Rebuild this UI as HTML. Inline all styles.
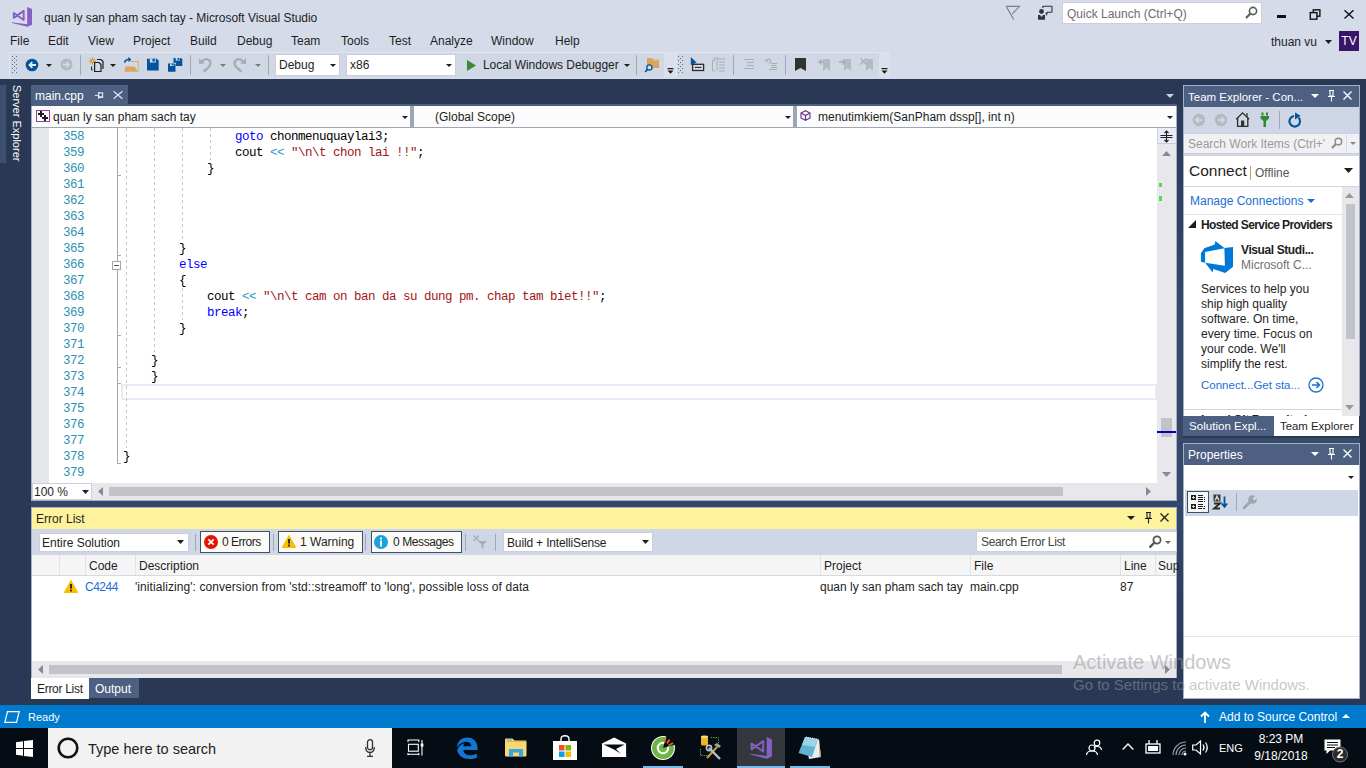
<!DOCTYPE html>
<html><head><meta charset="utf-8">
<style>
*{box-sizing:border-box}
html,body{margin:0;padding:0;width:1366px;height:768px;overflow:hidden;position:relative;background:#293955;font-family:"Liberation Sans",sans-serif;font-size:12px;color:#1e1e1e}
.a{position:absolute}
.t{position:absolute;white-space:nowrap;line-height:14px}
.mono{font-family:"Liberation Mono",monospace}
svg{position:absolute;overflow:visible}
.ln{position:absolute;left:48px;width:36px;text-align:right;font-family:"Liberation Mono",monospace;font-size:12.5px;letter-spacing:-0.5px;line-height:16px;color:#2B91AF;padding-top:1px;height:16px}
.cd{position:absolute;white-space:pre;font-family:"Liberation Mono",monospace;font-size:12.5px;letter-spacing:-0.5px;line-height:16px;color:#000;padding-top:1px;height:16px}
.kw{color:#0000FF}.str{color:#A31515}.op{color:#2B9BBF}
</style></head><body>
<!-- TOP CHROME -->
<div class="a" style="left:0;top:0;width:1366px;height:79px;background:#D6DBE9"></div>
<!-- VS logo -->
<svg style="left:11px;top:6px" width="22" height="22" viewBox="0 0 22 22">
<path d="M16.2 1 L21 3.1 V18.7 L16.5 20.8 L0.9 16.9 L0.9 16.3 L16.2 18.3 Z" fill="#865FC5"/>
<path d="M2.8 6.9 V11.9 L12.7 4.9 V14 Z" fill="none" stroke="#865FC5" stroke-width="1.9" stroke-linejoin="round"/>
</svg>
<div class="t" style="left:44px;top:11px;letter-spacing:-0.04px">quan ly san pham sach tay - Microsoft Visual Studio</div>

<!-- menu -->
<div class="t" style="left:10px;top:34px">File</div>
<div class="t" style="left:48px;top:34px">Edit</div>
<div class="t" style="left:88px;top:34px">View</div>
<div class="t" style="left:133px;top:34px">Project</div>
<div class="t" style="left:190px;top:34px">Build</div>
<div class="t" style="left:237px;top:34px">Debug</div>
<div class="t" style="left:291px;top:34px">Team</div>
<div class="t" style="left:341px;top:34px">Tools</div>
<div class="t" style="left:389px;top:34px">Test</div>
<div class="t" style="left:430px;top:34px">Analyze</div>
<div class="t" style="left:491px;top:34px">Window</div>
<div class="t" style="left:555px;top:34px">Help</div>

<!-- title right -->
<svg style="left:1005px;top:5px" width="16" height="16" viewBox="0 0 16 16"><path d="M1.2 1.4 H14.5 L7.3 8.8 M1.2 1.4 L8.8 14.5" fill="none" stroke="#7A808C" stroke-width="1.1"/></svg>
<svg style="left:1037px;top:5px" width="17" height="16" viewBox="0 0 17 16"><circle cx="4.5" cy="6.5" r="2.4" fill="#333"/><path d="M1 10 H3 L4.5 12 L6 10 H8 V14.8 H1 Z" fill="#333"/><path d="M5.8 3 V1.8 Q5.8 1.3 6.3 1.3 H14.5 Q15 1.3 15 1.8 V6.8 Q15 7.3 14.5 7.3 H10.5 L9.5 9.5 L9 7.3" fill="none" stroke="#333" stroke-width="1.1"/></svg>
<div class="a" style="left:1062px;top:2px;width:200px;height:22px;background:#FFFFFF;border:1px solid #CCCEDB"></div>
<div class="t" style="left:1067px;top:7px;color:#6D6D6D;font-size:12px">Quick Launch (Ctrl+Q)</div>
<svg style="left:1245px;top:6px" width="13" height="13" viewBox="0 0 13 13"><circle cx="8" cy="5" r="3.6" fill="none" stroke="#5A5A5A" stroke-width="1.6"/><path d="M5.5 7.5 L1 12" stroke="#5A5A5A" stroke-width="2.2"/></svg>
<div class="a" style="left:1277px;top:15px;width:9px;height:3px;background:#111"></div>
<svg style="left:1309px;top:9px" width="12" height="11" viewBox="0 0 12 11"><rect x="4.3" y="0.8" width="6.6" height="6.4" fill="none" stroke="#111" stroke-width="1.4"/><rect x="1.3" y="3.6" width="6.6" height="6.6" fill="#D6DBE9" stroke="#111" stroke-width="1.4"/></svg>
<svg style="left:1344px;top:10px" width="10" height="9" viewBox="0 0 10 9"><path d="M0.5 0.3 L9.5 8.5 M9.5 0.3 L0.5 8.5" stroke="#111" stroke-width="1.4"/></svg>
<div class="t" style="left:1271px;top:35px;font-size:12px">thuan vu</div>
<svg style="left:1325px;top:40px" width="7" height="4" viewBox="0 0 7 4"><path d="M0 0 H7 L3.5 4 Z" fill="#1E1E1E"/></svg>
<div class="a" style="left:1339px;top:31px;width:20px;height:20px;background:#3A1466"></div>
<div class="t" style="left:1339px;top:34px;width:20px;text-align:center;color:#fff;font-size:12px">TV</div>

<!-- TOOLBAR 1 -->
<div class="a" style="left:9px;top:52px;width:655px;height:25px;background:#D0D7E5;border-top:1px solid #E2E6EF;border-left:1px solid #E2E6EF"></div>
<div class="a" style="left:664px;top:52px;width:12px;height:25px;background:#DCE0EB"></div>
<div class="a" style="left:676px;top:52px;width:203px;height:25px;background:#D0D7E5;border-top:1px solid #E2E6EF;border-left:1px solid #E2E6EF"></div>
<div class="a" style="left:879px;top:52px;width:11px;height:25px;background:#DCE0EB"></div>
<svg style="left:12px;top:56px" width="5" height="18" viewBox="0 0 5 18"><g fill="#5F6B80"><rect x="0" y="0" width="1" height="1"/><rect x="4" y="0" width="1" height="1"/><rect x="2" y="2" width="1" height="1"/><rect x="0" y="4" width="1" height="1"/><rect x="4" y="4" width="1" height="1"/><rect x="2" y="6" width="1" height="1"/><rect x="0" y="8" width="1" height="1"/><rect x="4" y="8" width="1" height="1"/><rect x="2" y="10" width="1" height="1"/><rect x="0" y="12" width="1" height="1"/><rect x="4" y="12" width="1" height="1"/><rect x="2" y="14" width="1" height="1"/><rect x="0" y="16" width="1" height="1"/><rect x="4" y="16" width="1" height="1"/></g></svg>
<svg style="left:678px;top:56px" width="5" height="18" viewBox="0 0 5 18"><g fill="#5F6B80"><rect x="0" y="0" width="1" height="1"/><rect x="4" y="0" width="1" height="1"/><rect x="2" y="2" width="1" height="1"/><rect x="0" y="4" width="1" height="1"/><rect x="4" y="4" width="1" height="1"/><rect x="2" y="6" width="1" height="1"/><rect x="0" y="8" width="1" height="1"/><rect x="4" y="8" width="1" height="1"/><rect x="2" y="10" width="1" height="1"/><rect x="0" y="12" width="1" height="1"/><rect x="4" y="12" width="1" height="1"/><rect x="2" y="14" width="1" height="1"/><rect x="0" y="16" width="1" height="1"/><rect x="4" y="16" width="1" height="1"/></g></svg>
<!-- back/forward -->
<svg style="left:25px;top:58px" width="14" height="14" viewBox="0 0 14 14"><circle cx="7" cy="7" r="6.3" fill="#00539C"/><path d="M11 7 H4.5 M7.3 4.2 L4.5 7 L7.3 9.8" fill="none" stroke="#E8ECF4" stroke-width="1.8"/></svg>
<svg style="left:46px;top:64px" width="6" height="3" viewBox="0 0 6 3"><path d="M0 0 H6 L3 3 Z" fill="#1E1E1E"/></svg>
<svg style="left:60px;top:58px" width="13" height="13" viewBox="0 0 13 13"><circle cx="6.5" cy="6.5" r="6" fill="#B4B9C2"/><path d="M3 6.5 H9 M6.5 4 L9 6.5 L6.5 9" fill="none" stroke="#D6DAE3" stroke-width="1.7"/></svg>
<div class="a" style="left:80px;top:55px;width:1px;height:20px;background:#A0A8B8"></div>
<!-- new project -->
<svg style="left:89px;top:57px" width="16" height="16" viewBox="0 0 16 16"><path d="M3.5 0.5 V7.5 M0 4 H7 M1 1.5 L6 6.5 M6 1.5 L1 6.5" stroke="#D08A1E" stroke-width="1"/><circle cx="3.5" cy="4" r="1.3" fill="#CFD6E5" stroke="#D08A1E" stroke-width="0.9"/><path d="M8 2.5 H12 L14 4.5 V12" fill="none" stroke="#1E1E1E" stroke-width="1.2"/><path d="M5.6 5.5 H10 L12 7.5 V14.5 H5.6 Z" fill="#D6DBE6" stroke="#1E1E1E" stroke-width="1.2"/><path d="M2.6 9.5 V13 H3.8" fill="none" stroke="#1E1E1E" stroke-width="1"/></svg>
<svg style="left:110px;top:64px" width="6" height="3" viewBox="0 0 6 3"><path d="M0 0 H6 L3 3 Z" fill="#1E1E1E"/></svg>
<!-- open -->
<svg style="left:123px;top:57px" width="16" height="15" viewBox="0 0 16 15"><path d="M7.5 4.5 H15 V14.5" fill="none" stroke="#DCA75A" stroke-width="1.2"/><path d="M7 5 H14.6 V14 H7 Z" fill="#D3D8E3"/><path d="M2.5 9.5 H11.5 L15 14.7 H1.5 Z" fill="#DCA75A"/><path d="M1.5 5.5 Q2.5 2.2 6 2.5" fill="none" stroke="#00539C" stroke-width="1.6"/><path d="M5.3 0 L8.5 2.6 L5.5 5 Z" fill="#00539C"/></svg>
<!-- save -->
<svg style="left:147px;top:58px" width="12" height="13" viewBox="0 0 12 13"><path d="M0 0.8 H9.8 L11.7 2.8 V12.5 H0 Z" fill="#00539C"/><rect x="2.8" y="0.8" width="6" height="3.8" fill="#D0D6E4"/><rect x="5.5" y="0.8" width="2.3" height="2.8" fill="#00539C"/></svg>
<svg style="left:168px;top:58px" width="15" height="14" viewBox="0 0 15 14"><path d="M5.5 0 H13 L14.3 1.3 V8 H5.5 Z" fill="#00539C"/><rect x="7.7" y="0" width="4" height="2.6" fill="#D0D6E4"/><rect x="9.6" y="0" width="1.5" height="2" fill="#00539C"/><path d="M-0.5 4.8 H8 V14.3 H-0.5 Z" fill="#D0D6E4"/><path d="M0 5.5 H6.5 L7.5 6.5 V13.7 H0 Z" fill="#00539C"/><rect x="2" y="5.5" width="3.6" height="2.5" fill="#D0D6E4"/><rect x="3.7" y="5.5" width="1.3" height="1.8" fill="#00539C"/></svg>
<div class="a" style="left:190px;top:55px;width:1px;height:20px;background:#A0A8B8"></div>
<!-- undo/redo -->
<svg style="left:194px;top:54px" width="22" height="20" viewBox="0 0 22 20"><path d="M5 4.2 L5 10 L10.8 9.5 Z" fill="#A5ACB8"/><path d="M7.5 7.8 Q10.5 4.5 13.5 5.3 Q17.2 6.8 16.3 10.5 Q15.2 13.5 9.5 17.5" fill="none" stroke="#A5ACB8" stroke-width="2.3"/></svg>
<svg style="left:220px;top:64px" width="6" height="3" viewBox="0 0 6 3"><path d="M0 0 H6 L3 3 Z" fill="#7A7A7A"/></svg>
<svg style="left:229px;top:54px" width="22" height="20" viewBox="0 0 22 20"><g transform="translate(22,0) scale(-1,1)"><path d="M5 4.2 L5 10 L10.8 9.5 Z" fill="#A5ACB8"/><path d="M7.5 7.8 Q10.5 4.5 13.5 5.3 Q17.2 6.8 16.3 10.5 Q15.2 13.5 9.5 17.5" fill="none" stroke="#A5ACB8" stroke-width="2.3"/></g></svg>
<svg style="left:255px;top:64px" width="6" height="3" viewBox="0 0 6 3"><path d="M0 0 H6 L3 3 Z" fill="#7A7A7A"/></svg>
<div class="a" style="left:268px;top:55px;width:1px;height:20px;background:#A0A8B8"></div>
<!-- combos -->
<div class="a" style="left:275px;top:54px;width:65px;height:22px;background:#fff;border:1px solid #CCCEDB"></div>
<div class="t" style="left:279px;top:58px;font-size:12px">Debug</div>
<svg style="left:330px;top:64px" width="6" height="3" viewBox="0 0 6 3"><path d="M0 0 H6 L3 3 Z" fill="#1E1E1E"/></svg>
<div class="a" style="left:346px;top:54px;width:110px;height:22px;background:#fff;border:1px solid #CCCEDB"></div>
<div class="t" style="left:350px;top:58px;font-size:12px">x86</div>
<svg style="left:446px;top:64px" width="6" height="3" viewBox="0 0 6 3"><path d="M0 0 H6 L3 3 Z" fill="#1E1E1E"/></svg>
<svg style="left:467px;top:60px" width="9" height="11" viewBox="0 0 9 11"><path d="M0 0 L9 5.5 L0 11 Z" fill="#388A34"/></svg>
<div class="t" style="left:483px;top:58px;letter-spacing:-0.05px">Local Windows Debugger</div>
<svg style="left:624px;top:64px" width="6" height="3" viewBox="0 0 6 3"><path d="M0 0 H6 L3 3 Z" fill="#1E1E1E"/></svg>
<div class="a" style="left:636px;top:55px;width:1px;height:20px;background:#A0A8B8"></div>
<svg style="left:645px;top:57px" width="15" height="16" viewBox="0 0 15 16"><path d="M2 1 H7 L8 2 H14 V11 H2 Z" fill="#D9A55A"/><path d="M8.5 3 H13" stroke="#F2DDB5" stroke-width="0.9"/><circle cx="4.4" cy="10.5" r="2.6" fill="#D8DCE6" stroke="#00539C" stroke-width="1.3"/><path d="M2.6 12.4 L0.6 14.4" stroke="#00539C" stroke-width="1.7" stroke-linecap="round"/></svg>
<svg style="left:667px;top:68px" width="7" height="6" viewBox="0 0 7 6"><path d="M0.5 0 H6.5 V1.2 H0.5 Z M0.5 2.6 H6.5 L3.5 5.8 Z" fill="#1E1E1E"/></svg>
<!-- toolbar 2 icons -->
<svg style="left:690px;top:57px" width="15" height="15" viewBox="0 0 15 15"><path d="M0.8 0 L0.8 8.5 L2.8 6.6 L4.6 9.8 L5.8 9.2 L4.3 6 L6.8 5.8 Z" fill="#00539C"/><rect x="2.6" y="7.3" width="11" height="6.2" fill="#D6DBE7" stroke="#2A2A2A" stroke-width="1.3"/><path d="M4.8 10.4 H11.4" stroke="#2A2A2A" stroke-width="1.1"/></svg>
<svg style="left:712px;top:57px" width="14" height="15" viewBox="0 0 14 15"><path d="M3 3.5 H0.5 V14 H3 M2 3 V1 H7" fill="none" stroke="#A8AEB8" stroke-width="1"/><path d="M5 2 H13 M7 5 H13 M7 8 H13 M7 11 H13 M7 14 H13 M5 2 V14" stroke="#A8AEB8" stroke-width="1"/></svg>
<div class="a" style="left:733px;top:55px;width:1px;height:20px;background:#A0A8B8"></div>
<svg style="left:744px;top:59px" width="10" height="10" viewBox="0 0 10 10"><path d="M0 0.5 H10 M3 3.5 H10 M3 6.5 H10 M0 9.5 H10" stroke="#A8AEB8" stroke-width="1"/></svg>
<svg style="left:765px;top:58px" width="12" height="12" viewBox="0 0 12 12"><path d="M1 3 Q3 0 5.5 2 Q6.5 4 4 5" fill="none" stroke="#A8AEB8" stroke-width="1.2"/><path d="M0 1.5 L1 3.5 L3 3" fill="none" stroke="#A8AEB8" stroke-width="1"/><path d="M6 5.5 H12 M6 7.5 H12 M6 9.5 H12 M4 11.5 H12" stroke="#A8AEB8" stroke-width="1"/></svg>
<div class="a" style="left:785px;top:55px;width:1px;height:20px;background:#A0A8B8"></div>
<svg style="left:795px;top:58px" width="11" height="13" viewBox="0 0 11 13"><path d="M0 0 H11 V13 L5.5 10 L0 13 Z" fill="#333"/></svg>
<svg style="left:818px;top:58px" width="12" height="13" viewBox="0 0 12 13"><path d="M5 1 H12 V13 L8.5 10 L5 13 Z" fill="#B4B9C2"/><path d="M6 4 H1 M3.5 1.5 L1 4 L3.5 6.5" fill="none" stroke="#A8AEB8" stroke-width="1.4"/></svg>
<svg style="left:839px;top:58px" width="12" height="13" viewBox="0 0 12 13"><path d="M5 1 H12 V13 L8.5 10 L5 13 Z" fill="#B4B9C2"/><path d="M0 4 H6 M3.5 1.5 L6 4 L3.5 6.5" fill="none" stroke="#A8AEB8" stroke-width="1.4"/></svg>
<svg style="left:860px;top:58px" width="13" height="13" viewBox="0 0 13 13"><path d="M6 1 H13 V13 L9.5 10 L6 13 Z" fill="#B4B9C2"/><path d="M0.5 0.5 L6.5 6.5 M6.5 0.5 L0.5 6.5" stroke="#A8AEB8" stroke-width="1.4"/></svg>
<svg style="left:881px;top:68px" width="7" height="6" viewBox="0 0 7 6"><path d="M0.5 0 H6.5 V1.2 H0.5 Z M0.5 2.6 H6.5 L3.5 5.8 Z" fill="#1E1E1E"/></svg>

<!-- DOC TAB -->
<div class="a" style="left:31px;top:85px;width:97px;height:20px;background:#4D6082"></div>
<div class="t" style="left:35px;top:89px;color:#fff;font-size:12px">main.cpp</div>
<svg style="left:94px;top:91px" width="10" height="9" viewBox="0 0 10 9"><path d="M0.8 4.5 H4.5" stroke="#DDE1EA" stroke-width="1.2"/><path d="M4.6 1 V8" stroke="#DDE1EA" stroke-width="1.3"/><path d="M4.6 1.8 H8.6 V6.4 H4.6" fill="none" stroke="#DDE1EA" stroke-width="1.2"/><path d="M4.6 6 H9.1" stroke="#DDE1EA" stroke-width="1.6"/></svg>
<svg style="left:113px;top:91px" width="10" height="8" viewBox="0 0 10 8"><path d="M0.6 0.3 L9.4 7.7 M9.4 0.3 L0.6 7.7" stroke="#DDE1EA" stroke-width="1.3"/></svg>
<svg style="left:1166px;top:94px" width="8" height="4" viewBox="0 0 8 4"><path d="M0 0 H8 L4 4 Z" fill="#CED4DD"/></svg>
<div class="a" style="left:31px;top:104px;width:1146px;height:2px;background:#4D6082"></div>
<!-- NAV BAR -->
<div class="a" style="left:31px;top:106px;width:1146px;height:22px;background:#FCFCFC;border-bottom:1px solid #9BA6B6"></div>
<div class="a" style="left:410px;top:106px;width:4px;height:21px;background:#9BA6B6"></div>
<div class="a" style="left:793px;top:106px;width:4px;height:21px;background:#9BA6B6"></div>
<svg style="left:36px;top:110px" width="14" height="12" viewBox="0 0 14 12"><rect x="0.5" y="0.5" width="13" height="11" fill="#fff" stroke="#9B3FA0" stroke-width="1"/><path d="M2 4 H8 M5 1 V7 M6 8 H12 M9 5 V11" stroke="#1E1E1E" stroke-width="2"/></svg>
<div class="t" style="left:53px;top:110px;font-size:12px">quan ly san pham sach tay</div>
<svg style="left:402px;top:116px" width="6" height="3" viewBox="0 0 6 3"><path d="M0 0 H6 L3 3 Z" fill="#1E1E1E"/></svg>
<div class="t" style="left:435px;top:110px;font-size:12px">(Global Scope)</div>
<svg style="left:785px;top:116px" width="6" height="3" viewBox="0 0 6 3"><path d="M0 0 H6 L3 3 Z" fill="#1E1E1E"/></svg>
<svg style="left:800px;top:110px" width="11" height="11" viewBox="0 0 11 11"><path d="M5.5 0.7 L10 3 V8 L5.5 10.3 L1 8 V3 Z M1 3 L5.5 5.5 L10 3 M5.5 5.5 V10.3" fill="none" stroke="#652D90" stroke-width="1.1"/></svg>
<div class="t" style="left:818px;top:110px;font-size:12px">menutimkiem(SanPham dssp[], int n)</div>
<svg style="left:1167px;top:116px" width="6" height="3" viewBox="0 0 6 3"><path d="M0 0 H6 L3 3 Z" fill="#1E1E1E"/></svg>

<!-- EDITOR -->
<div class="a" style="left:31px;top:128px;width:1145px;height:355px;background:#FFFFFF"></div>
<div class="a" style="left:32px;top:128px;width:17px;height:355px;background:#E6E7E8"></div>
<div class="a" style="left:121px;top:384px;width:1036px;height:16px;border:2px solid #EAEAF2"></div>
<div class="a" style="left:126px;top:128px;width:1px;height:320px;background:repeating-linear-gradient(#C6C6C6 0 3px,transparent 3px 6px)"></div>
<div class="a" style="left:154px;top:128px;width:1px;height:224px;background:repeating-linear-gradient(#C6C6C6 0 3px,transparent 3px 6px)"></div>
<div class="a" style="left:182px;top:128px;width:1px;height:112px;background:repeating-linear-gradient(#C6C6C6 0 3px,transparent 3px 6px)"></div>
<div class="a" style="left:182px;top:288px;width:1px;height:32px;background:repeating-linear-gradient(#C6C6C6 0 3px,transparent 3px 6px)"></div>
<div class="a" style="left:210px;top:128px;width:1px;height:32px;background:repeating-linear-gradient(#C6C6C6 0 3px,transparent 3px 6px)"></div>
<div class="a" style="left:117px;top:128px;width:1px;height:133px;background:#A5A5A5"></div>
<div class="a" style="left:117px;top:269px;width:1px;height:195px;background:#A5A5A5"></div>
<div class="a" style="left:117px;top:175px;width:4px;height:1px;background:#A5A5A5"></div>
<div class="a" style="left:117px;top:255px;width:4px;height:1px;background:#A5A5A5"></div>
<div class="a" style="left:117px;top:335px;width:4px;height:1px;background:#A5A5A5"></div>
<div class="a" style="left:117px;top:367px;width:4px;height:1px;background:#A5A5A5"></div>
<div class="a" style="left:117px;top:383px;width:4px;height:1px;background:#A5A5A5"></div>
<div class="a" style="left:117px;top:463px;width:4px;height:1px;background:#A5A5A5"></div>
<div class="a" style="left:112px;top:261px;width:9px;height:9px;border:1px solid #A5A5A5;background:#fff"></div>
<div class="a" style="left:114px;top:265px;width:5px;height:1px;background:#555"></div>
<div class="ln" style="top:128px">358</div>
<div class="cd" style="left:235px;top:128px"><span class="kw">goto</span>&nbsp;chonmenuquaylai3;</div>
<div class="ln" style="top:144px">359</div>
<div class="cd" style="left:235px;top:144px">cout <span class="op">&lt;&lt;</span> <span class="str">"\n\t chon lai !!"</span>;</div>
<div class="ln" style="top:160px">360</div>
<div class="cd" style="left:207px;top:160px">}</div>
<div class="ln" style="top:176px">361</div>
<div class="ln" style="top:192px">362</div>
<div class="ln" style="top:208px">363</div>
<div class="ln" style="top:224px">364</div>
<div class="ln" style="top:240px">365</div>
<div class="cd" style="left:179px;top:240px">}</div>
<div class="ln" style="top:256px">366</div>
<div class="cd" style="left:179px;top:256px"><span class="kw">else</span></div>
<div class="ln" style="top:272px">367</div>
<div class="cd" style="left:179px;top:272px">{</div>
<div class="ln" style="top:288px">368</div>
<div class="cd" style="left:207px;top:288px">cout <span class="op">&lt;&lt;</span> <span class="str">"\n\t cam on ban da su dung pm. chap tam biet!!"</span>;</div>
<div class="ln" style="top:304px">369</div>
<div class="cd" style="left:207px;top:304px"><span class="kw">break</span>;</div>
<div class="ln" style="top:320px">370</div>
<div class="cd" style="left:179px;top:320px">}</div>
<div class="ln" style="top:336px">371</div>
<div class="ln" style="top:352px">372</div>
<div class="cd" style="left:151px;top:352px">}</div>
<div class="ln" style="top:368px">373</div>
<div class="cd" style="left:151px;top:368px">}</div>
<div class="ln" style="top:384px">374</div>
<div class="ln" style="top:400px">375</div>
<div class="ln" style="top:416px">376</div>
<div class="ln" style="top:432px">377</div>
<div class="ln" style="top:448px">378</div>
<div class="cd" style="left:123px;top:448px">}</div>
<div class="ln" style="top:464px">379</div>
<!-- V scrollbar -->
<div class="a" style="left:1157px;top:128px;width:19px;height:355px;background:#E8E8EC"></div>
<div class="a" style="left:1157px;top:128px;width:19px;height:16px;background:#E9EDF7;border-left:1px solid #CCCEDB;border-bottom:1px solid #CCCEDB"></div>
<svg style="left:1160px;top:130px" width="13" height="13" viewBox="0 0 13 13"><path d="M0.5 5.5 H12.5 M0.5 7.5 H12.5 M6.5 1 V12 M4.5 3 L6.5 1 L8.5 3 M4.5 10 L6.5 12 L8.5 10" fill="none" stroke="#1E1E1E" stroke-width="1.1"/></svg>
<svg style="left:1162px;top:151px" width="9" height="5" viewBox="0 0 9 5"><path d="M0 5 H9 L4.5 0 Z" fill="#868999"/></svg>
<svg style="left:1162px;top:472px" width="9" height="5" viewBox="0 0 9 5"><path d="M0 0 H9 L4.5 5 Z" fill="#868999"/></svg>
<div class="a" style="left:1159px;top:183px;width:3px;height:4px;background:#57D657"></div>
<div class="a" style="left:1159px;top:196px;width:3px;height:5px;background:#57D657"></div>
<div class="a" style="left:1161px;top:418px;width:11px;height:19px;background:#C2C3C9"></div>
<div class="a" style="left:1157px;top:431px;width:19px;height:2px;background:#0000CD"></div>
<!-- H scroll / zoom -->
<div class="a" style="left:31px;top:483px;width:1145px;height:17px;background:#E8E8EC"></div>
<div class="a" style="left:32px;top:483px;width:60px;height:17px;background:#fff;border:1px solid #CCCEDB"></div>
<div class="t" style="left:34px;top:485px;font-size:12px">100 %</div>
<svg style="left:82px;top:490px" width="7" height="4" viewBox="0 0 7 4"><path d="M0 0 H7 L3.5 4 Z" fill="#1E1E1E"/></svg>
<svg style="left:98px;top:487px" width="5" height="9" viewBox="0 0 5 9"><path d="M5 0 V9 L0 4.5 Z" fill="#868999"/></svg>
<div class="a" style="left:109px;top:487px;width:954px;height:9px;background:#C2C3C9"></div>
<svg style="left:1146px;top:487px" width="5" height="9" viewBox="0 0 5 9"><path d="M0 0 V9 L5 4.5 Z" fill="#868999"/></svg>

<div class="a" style="left:31px;top:106px;width:1146px;height:395px;border:1px solid #A3B0C8;border-top:none"></div>
<div class="a" style="left:1177px;top:104px;width:6px;height:594px;background:linear-gradient(#2B3A57 0px,#30405E 96px,#354869 196px,#354869 400px,#2F3F5D 496px,#2A3956 594px)"></div>
<div class="a" style="left:31px;top:501px;width:1146px;height:6px;background:#344769"></div>
<div class="a" style="left:1183px;top:437px;width:177px;height:6px;background:#364A6A"></div>
<!-- ERROR LIST -->
<div class="a" style="left:31px;top:507px;width:1146px;height:172px;background:#FFFFFF;border:1px solid #A3B0C8"></div>
<div class="a" style="left:32px;top:508px;width:1144px;height:21px;background:#FFF29D"></div>
<div class="t" style="left:36px;top:512px;font-size:12px">Error List</div>
<svg style="left:1127px;top:516px" width="8" height="4" viewBox="0 0 8 4"><path d="M0 0 H8 L4 4 Z" fill="#1E1E1E"/></svg>
<svg style="left:1144px;top:512px" width="9" height="12" viewBox="0 0 9 12"><path d="M2 0.5 H7 M3 0.5 V6 H6 V0.5 M1 6.5 H8 M4.5 6.5 V11.5" fill="none" stroke="#1E1E1E" stroke-width="1.1"/></svg>
<svg style="left:1160px;top:513px" width="9" height="9" viewBox="0 0 9 9"><path d="M0.5 0.5 L8.5 8.5 M8.5 0.5 L0.5 8.5" stroke="#1E1E1E" stroke-width="1.3"/></svg>
<div class="a" style="left:32px;top:529px;width:1144px;height:26px;background:#CFD6E5"></div>
<div class="a" style="left:39px;top:533px;width:150px;height:19px;background:#fff;border:1px solid #CCCEDB"></div>
<div class="t" style="left:42px;top:536px;font-size:12px">Entire Solution</div>
<svg style="left:177px;top:540px" width="7" height="4" viewBox="0 0 7 4"><path d="M0 0 H7 L3.5 4 Z" fill="#1E1E1E"/></svg>
<div class="a" style="left:195px;top:534px;width:1px;height:17px;background:#A0A8B8"></div>
<div class="a" style="left:200px;top:531px;width:70px;height:22px;background:#FCFBF7;border:1px solid #3F4F6C"></div>
<svg style="left:204px;top:535px" width="14" height="14" viewBox="0 0 14 14"><circle cx="7" cy="7" r="7" fill="#E51400"/><path d="M4.3 4.3 L9.7 9.7 M9.7 4.3 L4.3 9.7" stroke="#fff" stroke-width="1.8"/></svg>
<div class="t" style="left:222px;top:535px;font-size:12px;letter-spacing:-0.5px">0 Errors</div>
<div class="a" style="left:273px;top:534px;width:1px;height:17px;background:#A0A8B8"></div>
<div class="a" style="left:278px;top:531px;width:85px;height:22px;background:#FCFBF7;border:1px solid #3F4F6C"></div>
<svg style="left:282px;top:535px" width="14" height="13" viewBox="0 0 14 13"><path d="M7 0.5 L13.7 12.5 H0.3 Z" fill="#F6C000" stroke="#F6C000" stroke-linejoin="round"/><path d="M7 4 V8.5" stroke="#1E1E1E" stroke-width="1.8"/><rect x="6.1" y="9.6" width="1.8" height="1.8" fill="#1E1E1E"/></svg>
<div class="t" style="left:300px;top:535px;font-size:12px">1 Warning</div>
<div class="a" style="left:365px;top:534px;width:1px;height:17px;background:#A0A8B8"></div>
<div class="a" style="left:371px;top:531px;width:91px;height:22px;background:#FCFBF7;border:1px solid #3F4F6C"></div>
<svg style="left:374px;top:535px" width="14" height="14" viewBox="0 0 14 14"><circle cx="7" cy="7" r="7" fill="#1BA1E2"/><rect x="6" y="5.5" width="2" height="6" fill="#fff"/><rect x="6" y="2.5" width="2" height="2" fill="#fff"/></svg>
<div class="t" style="left:393px;top:535px;font-size:12px;letter-spacing:-0.4px">0 Messages</div>
<div class="a" style="left:465px;top:534px;width:1px;height:17px;background:#A0A8B8"></div>
<svg style="left:473px;top:535px" width="14" height="14" viewBox="0 0 14 14"><path d="M0.5 0.5 L6 6 M6 0.5 L0.5 6" stroke="#A8AEB8" stroke-width="1.4"/><path d="M5 6 H14 L10.5 9.5 V14 L8.5 12.5 V9.5 Z" fill="#A8AEB8"/></svg>
<div class="a" style="left:495px;top:534px;width:1px;height:17px;background:#A0A8B8"></div>
<div class="a" style="left:503px;top:532px;width:150px;height:20px;background:#fff;border:1px solid #CCCEDB"></div>
<div class="t" style="left:507px;top:536px;font-size:12px;letter-spacing:-0.15px">Build + IntelliSense</div>
<svg style="left:642px;top:540px" width="7" height="4" viewBox="0 0 7 4"><path d="M0 0 H7 L3.5 4 Z" fill="#1E1E1E"/></svg>
<div class="a" style="left:976px;top:531px;width:201px;height:21px;background:#fff;border:1px solid #CCCEDB"></div>
<div class="t" style="left:981px;top:535px;font-size:12px;letter-spacing:-0.35px;color:#444">Search Error List</div>
<svg style="left:1149px;top:535px" width="13" height="13" viewBox="0 0 13 13"><circle cx="8" cy="5" r="3.6" fill="none" stroke="#555" stroke-width="1.8"/><path d="M5.5 7.5 L1.2 11.8" stroke="#555" stroke-width="2.4" stroke-linecap="round"/></svg>
<svg style="left:1165px;top:541px" width="6" height="3" viewBox="0 0 6 3"><path d="M0 0 H6 L3 3 Z" fill="#666"/></svg>
<!-- column headers -->
<div class="a" style="left:32px;top:555px;width:1144px;height:21px;background:#F5F5F5;border-bottom:1px solid #D5D9E2"></div>
<div class="a" style="left:59px;top:555px;width:1px;height:20px;background:#E0E3E8"></div>
<div class="a" style="left:85px;top:555px;width:1px;height:20px;background:#E0E3E8"></div>
<div class="a" style="left:135px;top:555px;width:1px;height:20px;background:#E0E3E8"></div>
<div class="a" style="left:820px;top:555px;width:1px;height:20px;background:#E0E3E8"></div>
<div class="a" style="left:970px;top:555px;width:1px;height:20px;background:#E0E3E8"></div>
<div class="a" style="left:1120px;top:555px;width:1px;height:20px;background:#E0E3E8"></div>
<div class="a" style="left:1155px;top:555px;width:1px;height:20px;background:#E0E3E8"></div>
<div class="t" style="left:89px;top:559px;font-size:12px">Code</div>
<div class="t" style="left:139px;top:559px;font-size:12px">Description</div>
<div class="t" style="left:824px;top:559px;font-size:12px">Project</div>
<div class="t" style="left:974px;top:559px;font-size:12px">File</div>
<div class="t" style="left:1124px;top:559px;font-size:12px">Line</div>
<div class="t" style="left:1158px;top:559px;font-size:12px">Sup</div>
<svg style="left:64px;top:580px" width="14" height="13" viewBox="0 0 14 13"><path d="M7 0.5 L13.7 12.5 H0.3 Z" fill="#F6C000" stroke="#F6C000" stroke-linejoin="round"/><path d="M7 4 V8.5" stroke="#1E1E1E" stroke-width="1.8"/><rect x="6.1" y="9.6" width="1.8" height="1.8" fill="#1E1E1E"/></svg>
<div class="t" style="left:85px;top:580px;font-size:12px;letter-spacing:-0.5px;color:#1A6FD6">C4244</div>
<div class="t" style="left:135px;top:580px;font-size:12px;letter-spacing:0.07px">'initializing': conversion from 'std::streamoff' to 'long', possible loss of data</div>
<div class="t" style="left:820px;top:580px;font-size:12px">quan ly san pham sach tay</div>
<div class="t" style="left:970px;top:580px;font-size:12px">main.cpp</div>
<div class="t" style="left:1120px;top:580px;font-size:12px">87</div>
<!-- h scroll -->
<div class="a" style="left:32px;top:661px;width:1144px;height:17px;background:#E8E8EC"></div>
<svg style="left:38px;top:665px" width="5" height="9" viewBox="0 0 5 9"><path d="M5 0 V9 L0 4.5 Z" fill="#868999"/></svg>
<div class="a" style="left:49px;top:665px;width:1013px;height:9px;background:#C2C3C9"></div>
<svg style="left:1165px;top:665px" width="5" height="9" viewBox="0 0 5 9"><path d="M0 0 V9 L5 4.5 Z" fill="#868999"/></svg>
<!-- bottom tabs -->
<div class="a" style="left:31px;top:678px;width:1146px;height:27px;background:#293955"></div>
<div class="a" style="left:31px;top:678px;width:58px;height:21px;background:#FFFFFF"></div>
<div class="t" style="left:37px;top:682px;font-size:12px;letter-spacing:-0.3px">Error List</div>
<div class="a" style="left:89px;top:678px;width:50px;height:20px;background:#4D6082"></div>
<div class="t" style="left:95px;top:682px;font-size:12px;color:#fff">Output</div>

<!-- TEAM EXPLORER -->
<div class="a" style="left:1183px;top:85px;width:177px;height:352px;background:#fff;border:1px solid #A3B0C8"></div>
<div class="a" style="left:1184px;top:86px;width:175px;height:21px;background:#4D6082"></div>
<div class="t" style="left:1188px;top:90px;color:#fff;font-size:11.5px">Team Explorer - Con...</div>
<svg style="left:1311px;top:94px" width="8" height="4" viewBox="0 0 8 4"><path d="M0 0 H8 L4 4 Z" fill="#fff"/></svg>
<svg style="left:1327px;top:90px" width="9" height="12" viewBox="0 0 9 12"><path d="M2 0.5 H7 M3 0.5 V6 H6 V0.5 M1 6.5 H8 M4.5 6.5 V11.5" fill="none" stroke="#fff" stroke-width="1.1"/></svg>
<svg style="left:1343px;top:91px" width="9" height="9" viewBox="0 0 9 9"><path d="M0.5 0.5 L8.5 8.5 M8.5 0.5 L0.5 8.5" stroke="#fff" stroke-width="1.3"/></svg>
<div class="a" style="left:1184px;top:107px;width:175px;height:26px;background:#CFD6E5"></div>
<svg style="left:1192px;top:113px" width="14" height="14" viewBox="0 0 14 14"><circle cx="7" cy="7" r="6.2" fill="#B4B9C2"/><path d="M10.5 7 H4 M6.6 4.4 L4 7 L6.6 9.6" fill="none" stroke="#D8DCE5" stroke-width="1.6"/></svg>
<svg style="left:1214px;top:113px" width="14" height="14" viewBox="0 0 14 14"><circle cx="7" cy="7" r="6.2" fill="#B4B9C2"/><path d="M3.5 7 H10 M7.4 4.4 L10 7 L7.4 9.6" fill="none" stroke="#D8DCE5" stroke-width="1.6"/></svg>
<svg style="left:1235px;top:112px" width="16" height="16" viewBox="0 0 16 16"><path d="M1.2 7.2 L7.6 0.9 L14.2 7.2" fill="none" stroke="#2D2D2D" stroke-width="1.3"/><path d="M12 5 V1" stroke="#2D2D2D" stroke-width="1.2"/><path d="M2.6 6 V14.4 H12.8 V6" fill="none" stroke="#2D2D2D" stroke-width="1.3"/><rect x="6" y="8.5" width="3.2" height="5.9" fill="#333"/></svg>
<svg style="left:1260px;top:112px" width="10" height="16" viewBox="0 0 10 16"><rect x="1.5" y="0.5" width="2" height="3" fill="#2E8B2E"/><rect x="6" y="0.5" width="2" height="3" fill="#2E8B2E"/><path d="M0.5 4 H9 V6.5 L6 9 V15 H3.5 V9 L0.5 6.5 Z" fill="#2E8B2E"/></svg>
<div class="a" style="left:1279px;top:111px;width:1px;height:18px;background:#A0A8B8"></div>
<svg style="left:1288px;top:112px" width="14" height="16" viewBox="0 0 14 16"><path d="M10.5 5.5 A5.3 5.3 0 1 1 6 4" fill="none" stroke="#00539C" stroke-width="2.1"/><path d="M7 0.5 L12.5 3.8 L7 7.5 Z" fill="#00539C"/></svg>
<div class="a" style="left:1184px;top:133px;width:175px;height:23px;background:#CFD6E5"></div>
<div class="a" style="left:1184px;top:133px;width:175px;height:21px;background:#F1F1F4;border-top:1px solid #CCCEDB;border-bottom:1px solid #CCCEDB"></div>
<div class="t" style="left:1188px;top:137px;color:#999;font-size:12px">Search Work Items (Ctrl+'</div>
<svg style="left:1331px;top:137px" width="12" height="12" viewBox="0 0 13 13"><circle cx="8" cy="5" r="3.6" fill="none" stroke="#8A8A8A" stroke-width="1.6"/><path d="M5.5 7.5 L1 12" stroke="#8A8A8A" stroke-width="2.2"/></svg>
<div class="a" style="left:1346px;top:133px;width:1px;height:20px;background:#D8DAE2"></div>
<svg style="left:1350px;top:142px" width="6" height="3" viewBox="0 0 6 3"><path d="M0 0 H6 L3 3 Z" fill="#8A8A8A"/></svg>
<div class="t" style="left:1189px;top:162px;font-size:15.5px;line-height:18px;color:#1E1E1E">Connect</div>
<div class="a" style="left:1250px;top:166px;width:1px;height:14px;background:#CA9F67"></div>
<div class="t" style="left:1255px;top:166px;font-size:12px;color:#555">Offline</div>
<svg style="left:1344px;top:168px" width="9" height="5" viewBox="0 0 9 5"><path d="M0 0 H9 L4.5 5 Z" fill="#1E1E1E"/></svg>
<div class="a" style="left:1184px;top:186px;width:175px;height:1px;background:#CCD5E6"></div>
<div class="t" style="left:1190px;top:194px;font-size:12px;color:#1A6FD6">Manage Connections</div>
<svg style="left:1307px;top:199px" width="8" height="4" viewBox="0 0 8 4"><path d="M0 0 H8 L4 4 Z" fill="#1A6FD6"/></svg>
<div class="a" style="left:1184px;top:214px;width:158px;height:1px;background:#DDE2EC"></div>
<svg style="left:1188px;top:220px" width="8" height="8" viewBox="0 0 8 8"><path d="M8 0 V8 H0 Z" fill="#1E1E1E"/></svg>
<div class="t" style="left:1201px;top:218px;font-size:12px;font-weight:bold;letter-spacing:-0.6px;color:#1E1E1E">Hosted Service Providers</div>
<svg style="left:1196px;top:236px" width="44" height="40" viewBox="0 0 44 40"><path d="M19.3 4.9 L28.4 12 L37 10.9 L37 30.7 L29.2 37 L17.2 33 L16.7 36.5 L9.1 26.8 L4.9 25.8 L4.9 17.2 L8.3 12.2 L18.75 8.6 Z M9.1 16.1 L28.4 12.2 L28.9 29.7 L9.1 26.8 Z" fill="#0078D7" fill-rule="evenodd"/></svg>
<div class="t" style="left:1241px;top:243px;font-size:12px;font-weight:bold;letter-spacing:-0.4px;color:#1E1E1E">Visual Studi...</div>
<div class="t" style="left:1241px;top:258px;font-size:12px;color:#717171">Microsoft C...</div>
<div class="a" style="left:1201px;top:282px;width:140px;font-size:12px;line-height:15px;color:#1E1E1E">Services to help you<br>ship high quality<br>software. On time,<br>every time. Focus on<br>your code. We'll<br>simplify the rest.</div>
<div class="t" style="left:1201px;top:378px;font-size:11.5px;color:#1A6FD6">Connect...Get sta...</div>
<svg style="left:1308px;top:377px" width="16" height="16" viewBox="0 0 16 16"><circle cx="8" cy="8" r="7" fill="none" stroke="#1A6FD6" stroke-width="1.3"/><path d="M4 8 H11.5 M8.5 5 L11.5 8 L8.5 11" fill="none" stroke="#1A6FD6" stroke-width="1.5"/></svg>
<div class="a" style="left:1184px;top:409px;width:158px;height:1px;background:#CCD5E6"></div>
<div class="a" style="left:1201px;top:414px;width:140px;height:2px;overflow:hidden"><div class="t" style="left:0;top:-1.5px;font-size:12px;font-weight:bold;letter-spacing:-0.4px;color:#1E1E1E">Local Git Repositories</div></div>
<div class="a" style="left:1342px;top:187px;width:17px;height:230px;background:#E8E8EC"></div>
<svg style="left:1345px;top:193px" width="9" height="5" viewBox="0 0 9 5"><path d="M0 5 H9 L4.5 0 Z" fill="#999"/></svg>
<div class="a" style="left:1346px;top:204px;width:9px;height:135px;background:#C2C3C9"></div>
<svg style="left:1345px;top:405px" width="9" height="5" viewBox="0 0 9 5"><path d="M0 0 H9 L4.5 5 Z" fill="#999"/></svg>
<!-- tabs -->
<div class="a" style="left:1183px;top:416px;width:177px;height:22px;background:#293955"></div>
<div class="a" style="left:1183px;top:416px;width:91px;height:20px;background:#4D6082"></div>
<div class="t" style="left:1189px;top:419px;font-size:11.6px;color:#fff">Solution Expl...</div>
<div class="a" style="left:1274px;top:416px;width:85px;height:20px;background:#fff"></div>
<div class="t" style="left:1280px;top:419px;font-size:11.4px;color:#1E1E1E">Team Explorer</div>

<!-- PROPERTIES -->
<div class="a" style="left:1183px;top:443px;width:177px;height:256px;background:#fff;border:1px solid #A3B0C8"></div>
<div class="a" style="left:1184px;top:444px;width:175px;height:21px;background:#4D6082"></div>
<div class="t" style="left:1188px;top:448px;color:#fff;font-size:12px">Properties</div>
<svg style="left:1311px;top:452px" width="8" height="4" viewBox="0 0 8 4"><path d="M0 0 H8 L4 4 Z" fill="#fff"/></svg>
<svg style="left:1327px;top:448px" width="9" height="12" viewBox="0 0 9 12"><path d="M2 0.5 H7 M3 0.5 V6 H6 V0.5 M1 6.5 H8 M4.5 6.5 V11.5" fill="none" stroke="#fff" stroke-width="1.1"/></svg>
<svg style="left:1343px;top:449px" width="9" height="9" viewBox="0 0 9 9"><path d="M0.5 0.5 L8.5 8.5 M8.5 0.5 L0.5 8.5" stroke="#fff" stroke-width="1.3"/></svg>
<svg style="left:1348px;top:476px" width="6" height="3" viewBox="0 0 6 3"><path d="M0 0 H6 L3 3 Z" fill="#1E1E1E"/></svg>
<div class="a" style="left:1185px;top:490px;width:173px;height:26px;background:#CFD6E5"></div>
<div class="a" style="left:1187px;top:491px;width:22px;height:22px;background:#F5F6F8;border:1px solid #3F4F6C"></div>
<svg style="left:1190px;top:494px" width="17" height="17" viewBox="0 0 17 17"><rect x="1" y="1" width="5" height="5" fill="#1E1E1E"/><rect x="1" y="10" width="5" height="5" fill="#1E1E1E"/><path d="M2 3.5 H5 M3.5 2 V5 M2 12.5 H5 M3.5 11 V14" stroke="#D8D8D8" stroke-width="1"/><path d="M8 1.5 H13 M8 3.5 H13 M8 5.5 H13 M8 7.5 H13 M8 10.5 H13 M8 12.5 H13 M8 14.5 H12" stroke="#1E1E1E" stroke-width="1"/><path d="M14 3.5 H15 M14 5.5 H15 M14 7.5 H15 M14 12.5 H15 M13 14.5 H15" stroke="#1E1E1E" stroke-width="1"/></svg>
<svg style="left:1213px;top:494px" width="17" height="17" viewBox="0 0 17 17"><rect x="0.5" y="0.5" width="7" height="7" fill="#3A3A3A"/><path d="M2 6.5 L4 1.8 L6 6.5 M2.8 4.8 H5.2" fill="none" stroke="#E0E0E0" stroke-width="1.1"/><path d="M1 9.5 H7 L1 14.5 H7" fill="none" stroke="#2A2A2A" stroke-width="1.8"/><path d="M11.5 2.5 V12.5 M8.8 9.5 L11.5 12.8 L14.2 9.5" fill="none" stroke="#00539C" stroke-width="1.8"/></svg>
<div class="a" style="left:1236px;top:493px;width:1px;height:18px;background:#A0A8B8"></div>
<svg style="left:1242px;top:494px" width="16" height="16" viewBox="0 0 16 16"><path d="M2 14 L8.5 7.5" stroke="#9EA4AE" stroke-width="2.6" stroke-linecap="round"/><circle cx="10.5" cy="5.5" r="4.3" fill="#9EA4AE"/><path d="M10.5 4.5 L13.5 1.5 L15.5 3.5 L12.5 6.5 Z" fill="#CFD6E5"/></svg>
<div class="a" style="left:1184px;top:636px;width:175px;height:1px;background:#E5E5E5"></div>

<!-- watermark -->
<div class="t" style="left:1073px;top:651px;font-size:20px;line-height:22px;color:rgba(150,150,150,0.55)">Activate Windows</div>
<div class="t" style="left:1073px;top:676px;font-size:15px;line-height:18px;color:rgba(150,150,150,0.55)">Go to Settings to activate Windows.</div>

<!-- MAIN AREA placeholder -->
<!-- Server explorer strip -->
<div class="a" style="left:0;top:85px;width:6px;height:78px;background:#3D4F6F"></div>
<div class="t" style="left:10px;top:85px;color:#fff;font-size:11px;transform-origin:0 0;transform:translate(14px,0) rotate(90deg)">Server Explorer</div>

<!-- STATUS BAR -->
<div class="a" style="left:0;top:705px;width:1366px;height:23px;background:#007ACC"></div>
<svg style="left:4px;top:711px" width="16" height="12" viewBox="0 0 16 12"><path d="M3.5 0.6 H15.2 L12.5 11.4 H0.8 Z" fill="none" stroke="#fff" stroke-width="1.2"/></svg>
<div class="t" style="left:28px;top:710px;color:#fff;font-size:11px">Ready</div>
<svg style="left:1200px;top:711px" width="10" height="12" viewBox="0 0 10 12"><path d="M5 12 V2 M1 5.5 L5 1.5 L9 5.5" fill="none" stroke="#fff" stroke-width="1.8"/></svg>
<div class="t" style="left:1219px;top:710px;color:#fff;font-size:12px">Add to Source Control</div>
<svg style="left:1342px;top:714px" width="8" height="4" viewBox="0 0 8 4"><path d="M0 4 H8 L4 0 Z" fill="#fff"/></svg>
<!-- TASKBAR -->
<div class="a" style="left:0;top:728px;width:1366px;height:40px;background:#060C14"></div>
<svg style="left:16px;top:740px" width="17" height="17" viewBox="0 0 17 17"><path d="M0 2.3 L7 1.3 V8 H0 Z M8 1.1 L17 0 V8 H8 Z M0 9 H7 V15.7 L0 14.7 Z M8 9 H17 V17 L8 15.9 Z" fill="#fff"/></svg>
<div class="a" style="left:48px;top:728px;width:344px;height:40px;background:#F2F2F2"></div>
<svg style="left:57px;top:737px" width="22" height="22" viewBox="0 0 22 22"><circle cx="11" cy="11" r="9.3" fill="none" stroke="#111" stroke-width="2.6"/></svg>
<div class="t" style="left:88px;top:740px;font-size:14.5px;line-height:18px;color:#1E1E1E">Type here to search</div>
<svg style="left:365px;top:739px" width="10" height="18" viewBox="0 0 10 18"><rect x="2.5" y="0.7" width="5" height="10" rx="2.5" fill="none" stroke="#333" stroke-width="1.3"/><path d="M0.7 8 Q0.7 13.5 5 13.5 Q9.3 13.5 9.3 8 M5 13.5 V17 M2 17.3 H8" fill="none" stroke="#333" stroke-width="1.3"/></svg>
<svg style="left:407px;top:739px" width="18" height="18" viewBox="0 0 18 18"><path d="M1 3 V1 H11.8 V3 M1 14 V16.2 M1 15.3 H11.8 M11.8 14 V16.2" fill="none" stroke="#fff" stroke-width="1.1"/><rect x="1.5" y="5.3" width="9.8" height="6.9" fill="none" stroke="#fff" stroke-width="1.1"/><path d="M15 1 V16.5" stroke="#fff" stroke-width="1.1"/><rect x="13.7" y="4.6" width="2.7" height="3" fill="#fff"/></svg>
<svg style="left:456px;top:737px" width="22" height="22" viewBox="0 0 22 22"><path d="M1 11 C1 4.5 5.5 0.5 11.5 0.5 C17.5 0.5 21.5 4.8 21.5 11 V13 H7.3 C7.8 16.5 10.5 18.3 14 18.3 C16.8 18.3 19 17.5 20.8 16.5 V20.8 C18.8 21.6 16.3 22 13.5 22 C6 22 1 17.5 1 11 Z M7.3 9.3 H15.3 C15.2 6.6 13.6 5 11.3 5 C9.2 5 7.6 6.8 7.3 9.3 Z" fill="#0F78D4" fill-rule="evenodd"/><path d="M0.8 12.5 Q3 6.5 10.5 5.2" fill="none" stroke="#060C14" stroke-width="1.3"/></svg>
<svg style="left:505px;top:738px" width="22" height="19" viewBox="0 0 22 19"><path d="M0 1.5 Q0 0.5 1 0.5 H7.5 L9.5 2.5 H20.5 Q21.5 2.5 21.5 3.5 V17.5 Q21.5 18.5 20.5 18.5 H1 Q0 18.5 0 17.5 Z" fill="#F8D775"/><path d="M0.5 3.5 H21" stroke="#E8B84B" stroke-width="1"/><rect x="2" y="1.3" width="5" height="1.2" fill="#5FB6E4"/><path d="M4 18.5 V11 H18 V18.5 H14 V14.5 H8 V18.5 Z" fill="#35A8E0"/></svg>
<svg style="left:553px;top:735px" width="24" height="25" viewBox="0 0 24 25"><path d="M8 6 V4 Q8 0.7 12 0.7 Q16 0.7 16 4 V6" fill="none" stroke="#fff" stroke-width="1.4"/><rect x="0" y="6" width="24" height="19" fill="#fff"/><rect x="6" y="10" width="5.5" height="5.5" fill="#F25022"/><rect x="12.5" y="10" width="5.5" height="5.5" fill="#7FBA00"/><rect x="6" y="16.5" width="5.5" height="5.5" fill="#00A4EF"/><rect x="12.5" y="16.5" width="5.5" height="5.5" fill="#FFB900"/></svg>
<svg style="left:601px;top:737px" width="27" height="21" viewBox="0 0 27 21"><path d="M1 6.4 L13.1 0.6 L25.1 6.4 V19.9 H1 Z" fill="#fff"/><path d="M2.5 7.4 L23.7 7.4 L15 12 L19.8 16.8 L13.5 12.8 Z" fill="#060C14"/></svg>
<svg style="left:650px;top:735px" width="26" height="26" viewBox="0 0 26 26"><circle cx="13" cy="13" r="12" fill="#fff"/><circle cx="13" cy="13" r="11" fill="#6DB546"/><circle cx="13" cy="13" r="5.2" fill="none" stroke="#fff" stroke-width="2"/><circle cx="13" cy="13" r="2.6" fill="#6DB546"/><path d="M13 13 L17 -1 L27 0 L27 9 Z" fill="#060C14"/><path d="M15.5 3 L14.5 7.5 M19.5 4.5 L17 8.5 M23 8 L18.5 10.5" stroke="#F26522" stroke-width="1.6"/></svg>
<svg style="left:698px;top:735px" width="28" height="26" viewBox="0 0 28 26"><rect x="3" y="1" width="7" height="9.5" rx="1.5" fill="#E8B923"/><ellipse cx="6.5" cy="1.8" rx="3.5" ry="1.3" fill="#F7DE7A"/><path d="M13 2.5 H20.5 V9 M2.5 14 V20.5 H9" fill="none" stroke="#4FB84F" stroke-width="1" stroke-dasharray="1.2 1.2"/><path d="M9 23 L19 12" stroke="#C9A23A" stroke-width="2"/><path d="M16 10 L19 8 L23 11 L21 13 Z" fill="#9AA3AD"/><path d="M11 13 L22 24" stroke="#B8C0C8" stroke-width="2.4"/><circle cx="11" cy="13" r="2.6" fill="none" stroke="#B8C0C8" stroke-width="1.6"/></svg>
<div class="a" style="left:737px;top:728px;width:48px;height:40px;background:#34373D"></div>
<div class="a" style="left:737px;top:766px;width:48px;height:2px;background:#76B9ED"></div>
<svg style="left:749px;top:736px" width="24" height="24" viewBox="0 0 22 22"><path d="M16.2 1 L21 3.1 V18.7 L16.5 20.8 L0.9 16.9 L0.9 16.3 L16.2 18.3 Z" fill="#8661C5"/><path d="M2.4 6.9 V12.1 L13 4.7 V14.2 Z" fill="none" stroke="#8661C5" stroke-width="1.8" stroke-linejoin="round"/></svg>
<div class="a" style="left:790px;top:766px;width:40px;height:2px;background:#76B9ED"></div>
<div class="a" style="left:643px;top:766px;width:40px;height:2px;background:#76B9ED"></div>
<svg style="left:797px;top:736px" width="25" height="24" viewBox="0 0 25 24"><path d="M8 1 L22 3.5 L24 21 L12 23 Z" fill="#E9EEF0"/><path d="M22 3.5 L24 21 L22.5 21.3 Z" fill="#C79A55"/><path d="M8 1 L21 3.2 L15 21 L1.5 17 Z" fill="#62B3CF"/><path d="M8 1 L21 3.2 L18 11 L5 9 Z" fill="#9AD3E6"/><path d="M9 1.2 L21 3.2" stroke="#DDE" stroke-width="1.2" stroke-dasharray="1 1"/></svg>
<!-- tray -->
<svg style="left:1086px;top:739px" width="16" height="16" viewBox="0 0 16 16"><circle cx="6" cy="9" r="3" fill="none" stroke="#fff" stroke-width="1.2"/><path d="M0.6 16 Q0.6 12 6 12 Q11.4 12 11.4 16" fill="none" stroke="#fff" stroke-width="1.2"/><circle cx="11" cy="4" r="2.8" fill="none" stroke="#fff" stroke-width="1.2"/><path d="M8 9 Q9 7.5 11 7.5 Q15.4 7.5 15.4 11" fill="none" stroke="#fff" stroke-width="1.2"/></svg>
<svg style="left:1122px;top:743px" width="12" height="7" viewBox="0 0 12 7"><path d="M0.7 6.5 L6 1 L11.3 6.5" fill="none" stroke="#fff" stroke-width="1.3"/></svg>
<svg style="left:1144px;top:740px" width="18" height="14" viewBox="0 0 18 14"><rect x="2" y="4" width="14" height="9" fill="none" stroke="#fff" stroke-width="1.3"/><rect x="4" y="6" width="10" height="5" fill="#fff"/><path d="M5 0 V4 M13 0 V4" stroke="#fff" stroke-width="1.3"/></svg>
<svg style="left:1172px;top:741px" width="15" height="15" viewBox="0 0 15 15"><path d="M1 14 A13 13 0 0 1 14 1 M4 14 A10 10 0 0 1 14 4 M7 14 A7 7 0 0 1 14 7 M10 14 A4 4 0 0 1 14 10" fill="none" stroke="#9AA0A6" stroke-width="1.2"/><circle cx="13" cy="13" r="1.5" fill="#fff"/></svg>
<svg style="left:1192px;top:740px" width="18" height="15" viewBox="0 0 18 15"><path d="M0.7 5 H4 L8.5 1 V14 L4 10 H0.7 Z" fill="none" stroke="#fff" stroke-width="1.2"/><path d="M11 4.5 Q13 7.5 11 10.5 M13.5 2.5 Q17 7.5 13.5 12.5" fill="none" stroke="#fff" stroke-width="1.2"/></svg>
<div class="t" style="left:1219px;top:741px;font-size:11px;color:#fff">ENG</div>
<div class="t" style="left:1250px;top:731px;width:62px;text-align:center;font-size:12px;line-height:17px;color:#fff">8:23 PM<br>9/18/2018</div>
<svg style="left:1324px;top:739px" width="26" height="24" viewBox="0 0 26 24"><path d="M0.5 0.5 H16.5 V11.5 H6 L2.5 15 V11.5 H0.5 Z" fill="#fff"/><path d="M3 3.5 H14 M3 6 H14 M3 8.5 H11" stroke="#060C14" stroke-width="1"/><circle cx="16" cy="15.5" r="7.5" fill="#2A2A2A" stroke="#777" stroke-width="1"/></svg>
<div class="t" style="left:1334px;top:747px;width:12px;text-align:center;font-size:12px;font-weight:bold;color:#fff">2</div>
</body></html>
